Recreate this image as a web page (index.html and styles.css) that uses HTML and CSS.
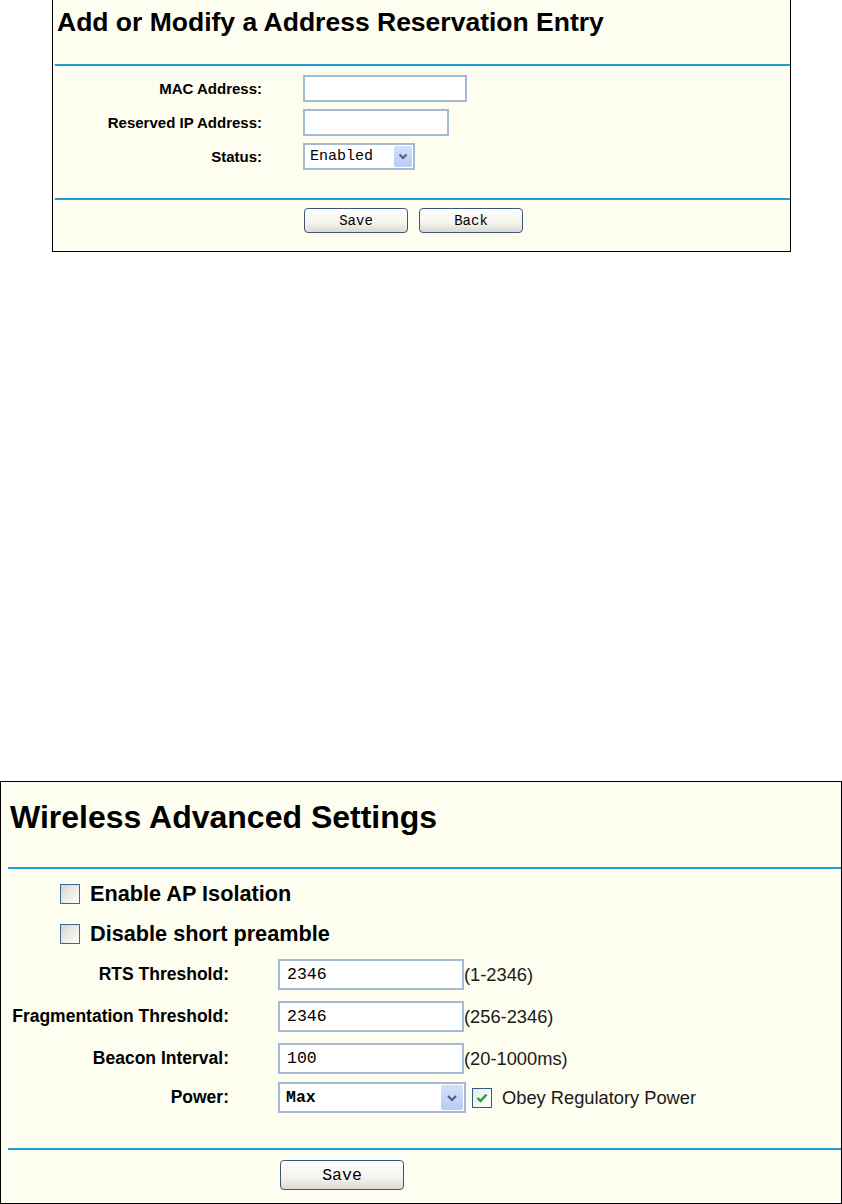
FILE: index.html
```html
<!DOCTYPE html>
<html>
<head>
<meta charset="utf-8">
<title>Router settings</title>
<link rel="stylesheet" href="styles.css">
</head>
<body>
<div class="page">
  <section class="panel panel-a">
    <h1 class="title-a">Add or Modify a Address Reservation Entry</h1>
    <div class="rule rule-a1"></div>
    <div class="rows-a">
      <div class="row-a">
        <label class="lbl-a">MAC Address:</label>
        <input class="txt txt-a txt-mac" type="text" value="">
      </div>
      <div class="row-a">
        <label class="lbl-a">Reserved IP Address:</label>
        <input class="txt txt-a txt-ip" type="text" value="">
      </div>
      <div class="row-a">
        <label class="lbl-a">Status:</label>
        <div class="sel sel-a">
          <span class="sel-text">Enabled</span>
          <span class="sel-btn">
            <svg width="10" height="7" viewBox="0 0 10 7"><path d="M1.5 1.5 L5 5 L8.5 1.5" fill="none" stroke="#4a5f86" stroke-width="2"/></svg>
          </span>
        </div>
      </div>
    </div>
    <div class="rule rule-a2"></div>
    <div class="btns-a">
      <button class="btn btn-a">Save</button>
      <button class="btn btn-a">Back</button>
    </div>
  </section>

  <section class="panel panel-b">
    <h1 class="title-b">Wireless Advanced Settings</h1>
    <div class="rule rule-b1"></div>
    <div class="checks">
      <div class="check-row"><span class="cb"></span><span class="check-lbl">Enable AP Isolation</span></div>
      <div class="check-row check-row2"><span class="cb"></span><span class="check-lbl">Disable short preamble</span></div>
    </div>
    <div class="rows-b">
      <div class="row-b">
        <label class="lbl-b">RTS Threshold:</label>
        <input class="txt txt-b" type="text" value="2346">
        <span class="hint">(1-2346)</span>
      </div>
      <div class="row-b">
        <label class="lbl-b">Fragmentation Threshold:</label>
        <input class="txt txt-b" type="text" value="2346">
        <span class="hint">(256-2346)</span>
      </div>
      <div class="row-b">
        <label class="lbl-b">Beacon Interval:</label>
        <input class="txt txt-b" type="text" value="100">
        <span class="hint">(20-1000ms)</span>
      </div>
      <div class="row-b row-b-tight">
        <label class="lbl-b">Power:</label>
        <div class="sel sel-b">
          <span class="sel-text sel-text-b">Max</span>
          <span class="sel-btn sel-btn-b">
            <svg width="12" height="8" viewBox="0 0 12 8"><path d="M2 2 L6 6 L10 2" fill="none" stroke="#4a5f86" stroke-width="2.2"/></svg>
          </span>
        </div>
        <span class="cb cb-on">
          <svg width="14" height="12" viewBox="0 0 14 12"><path d="M2.5 6 L5.5 9 L11.5 2.5" fill="none" stroke="#22a12a" stroke-width="2.4"/></svg>
        </span>
        <span class="hint obey">Obey Regulatory Power</span>
      </div>
    </div>
    <div class="rule rule-b2"></div>
    <div class="btns-b">
      <button class="btn btn-b">Save</button>
    </div>
  </section>
</div>
</body>
</html>
```

FILE: styles.css
```css
html, body {
  margin: 0;
  padding: 0;
  background: #ffffff;
}
body {
  font-family: "Liberation Sans", Arial, sans-serif;
  color: #000;
}
.page {
  display: flex;
  flex-direction: column;
  align-items: flex-start;
}
.panel {
  box-sizing: border-box;
  background: #fdfdf0;
  border: 1px solid #000;
}
.rule {
  height: 2px;
  background: #1b9dd6;
}

/* ---------- panel A ---------- */
.panel-a {
  margin-left: 52px;
  width: 739px;
  height: 252px;
  border-top: none;
}
.title-a {
  margin: 7px 0 0 4px;
  font-size: 26.5px;
  line-height: 30px;
  font-weight: bold;
}
.rule-a1 {
  margin: 27px 0 0 2px;
}
.rows-a {
  display: flex;
  flex-direction: column;
  gap: 7px;
  margin-top: 9px;
}
.row-a {
  display: flex;
  align-items: center;
  height: 27px;
  gap: 41px;
}
.lbl-a {
  width: 209px;
  text-align: right;
  font-weight: bold;
  font-size: 15px;
}
.txt {
  box-sizing: border-box;
  border: 2px solid #a6b9d2;
  background: #fff;
  margin: 0;
  font-family: "Liberation Mono", "Courier New", monospace;
  color: #000;
  outline: none;
}
.txt-a {
  height: 27px;
}
.txt-mac { width: 164px; }
.txt-ip { width: 146px; }

.sel {
  box-sizing: border-box;
  display: flex;
  align-items: center;
  justify-content: space-between;
  background: #fff;
  border: 2px solid #a6b9d2;
  padding: 1px;
}
.sel-a {
  width: 112px;
  height: 27px;
}
.sel-text {
  font-family: "Liberation Mono", "Courier New", monospace;
  font-size: 15px;
  padding-left: 4px;
}
.sel-btn {
  display: flex;
  align-items: center;
  justify-content: center;
  width: 18px;
  height: 100%;
  border-radius: 2px;
  background: linear-gradient(#d4e0fb, #b7cbf4);
}
.rule-a2 {
  margin: 28px 0 0 2px;
}
.btns-a {
  display: flex;
  gap: 11px;
  margin-top: 8px;
  padding-left: 251px;
}
.btn {
  box-sizing: border-box;
  border: 1px solid #3b5676;
  border-radius: 4px;
  background: linear-gradient(#ffffff 0%, #f4f3ee 60%, #dcd8cf 100%);
  font-family: "Liberation Mono", "Courier New", monospace;
  color: #000;
  padding: 0;
}
.btn-a {
  width: 104px;
  height: 25px;
  font-size: 14px;
}

/* ---------- panel B ---------- */
.panel-b {
  margin-top: 529px;
  width: 842px;
  height: 423px;
}
.title-b {
  margin: 17px 0 0 9px;
  font-size: 32px;
  line-height: 37px;
  font-weight: bold;
}
.rule-b1 {
  margin: 31px 0 0 7px;
}
.checks {
  display: flex;
  flex-direction: column;
  margin-top: 15px;
  padding-left: 59px;
}
.check-row {
  display: flex;
  align-items: center;
  height: 20px;
  gap: 10px;
}
.check-row2 {
  margin-top: 20px;
}
.cb {
  box-sizing: border-box;
  width: 20px;
  height: 20px;
  border: 1px solid #3f6891;
  background: linear-gradient(135deg, #d6d6d0 0%, #f3f3ef 70%, #ffffff 100%);
  display: flex;
  align-items: center;
  justify-content: center;
  flex: none;
}
.check-lbl {
  font-weight: bold;
  font-size: 21.7px;
}
.rows-b {
  display: flex;
  flex-direction: column;
  gap: 11px;
  margin-top: 15px;
}
.row-b {
  display: flex;
  align-items: center;
  height: 31px;
}
.row-b-tight {
  margin-top: -3px;
}
.lbl-b {
  width: 228px;
  margin-right: 49px;
  text-align: right;
  font-weight: bold;
  font-size: 17.5px;
}
.txt-b {
  width: 186px;
  height: 31px;
  font-size: 16.5px;
  padding-left: 7px;
}
.hint {
  font-size: 18.3px;
  color: #1a1a1a;
}
.sel-b {
  width: 188px;
  height: 31px;
}
.sel-text-b {
  font-size: 16.5px;
  font-weight: bold;
  padding-left: 5px;
}
.sel-btn-b {
  width: 22px;
}
.cb-on {
  margin-left: 6px;
  background: linear-gradient(135deg, #e8e8e3 0%, #fbfbf9 70%, #ffffff 100%);
  border-color: #2e5c84;
}
.obey {
  margin-left: 10px;
}
.rule-b2 {
  margin: 35px 0 0 7px;
}
.btns-b {
  display: flex;
  margin-top: 10px;
  padding-left: 279px;
}
.btn-b {
  width: 124px;
  height: 30px;
  font-size: 16.5px;
}
```
